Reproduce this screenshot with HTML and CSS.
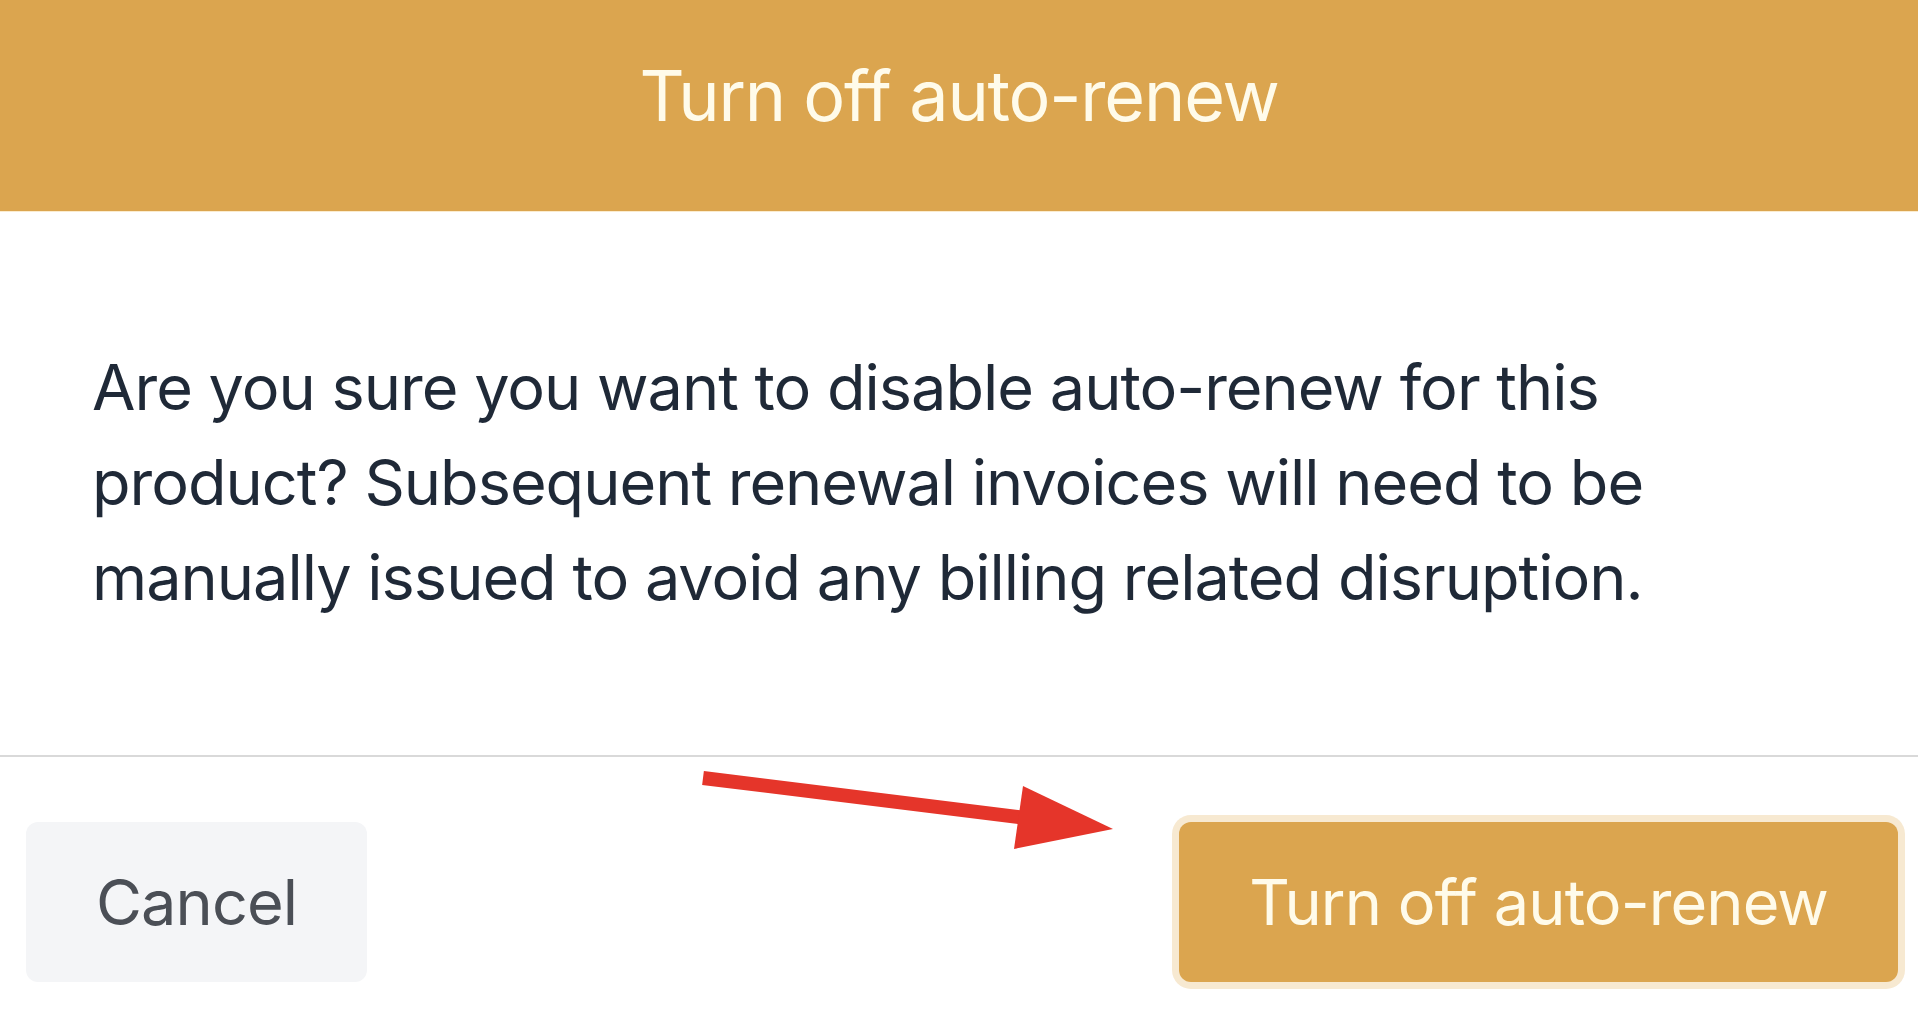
FILE: index.html
```html
<!DOCTYPE html>
<html lang="en">
<head>
  <meta charset="UTF-8">
  <meta name="viewport" content="width=device-width, initial-scale=1.0">
  <title>Turn off auto-renew</title>
  <link rel="stylesheet" href="styles.css">
</head>
<body>

  <div class="modal">
    <div class="modal-header">
      <h1>Turn off auto-renew</h1>
    </div>

    <div class="modal-body">
      <p>Are you sure you want to disable auto-renew for this product? Subsequent renewal invoices will need to be manually issued to avoid any billing related disruption.</p>
    </div>

    <div class="modal-footer">
      <button class="button button-cancel">Cancel</button>
      <button class="button button-confirm">Turn off auto-renew</button>

      <!-- pointer to the confirm button -->
      <svg class="arrow" width="430" height="100" viewBox="700 0 430 100">
        <line x1="703" y1="21" x2="1026" y2="61" stroke="#e5352a" stroke-width="14" />
        <polygon points="1023,29 1113,72 1014,92" fill="#e5352a" />
      </svg>
    </div>
  </div>

</body>
</html>
```

FILE: styles.css
```css
body {
  font-family: 'Inter', 'Noto Sans', sans-serif;
  background-color: #ffffff;
  margin: 0;
  padding: 0;
  color: #1f2937;
}
.modal {
  height: 100vh;
  display: flex;
  flex-direction: column;
  overflow: hidden;
}
.modal-header {
  background-color: #dba54f;
  height: 212px;
  box-sizing: border-box;
  padding-bottom: 20px;
  display: flex;
  justify-content: center;
  align-items: center;
  border-bottom: 1px solid #fbeccf;
}
h1 {
  margin: 0;
  font-size: 70px;
  font-weight: 400;
  line-height: 1;
  letter-spacing: -1.2px;
  color: #fffbea;
}
.modal-body {
  padding: 128px 92px 130px;
  border-bottom: 2px solid #d9d9d9;
}
.modal-body p {
  margin: 0;
  font-size: 63px;
  line-height: 95px;
  letter-spacing: -1px;
}
.modal-footer {
  position: relative;
  display: flex;
  justify-content: space-between;
  align-items: center;
  padding: 65px 20px 0 26px;
}
.button {
  font-family: inherit;
  font-size: 63px;
  letter-spacing: -0.9px;
  height: 160px;
  border: none;
  border-radius: 12px;
  padding: 0 70px;
  cursor: pointer;
}
.button-cancel {
  background-color: #f4f5f7;
  color: #4b4f56;
}
.button-confirm {
  background-color: #dba54f;
  color: #fffbea;
  box-shadow: 0 0 0 7px #f7e9d1;
}
.arrow {
  position: absolute;
  left: 700px;
  top: 0;
  pointer-events: none;
}
```
